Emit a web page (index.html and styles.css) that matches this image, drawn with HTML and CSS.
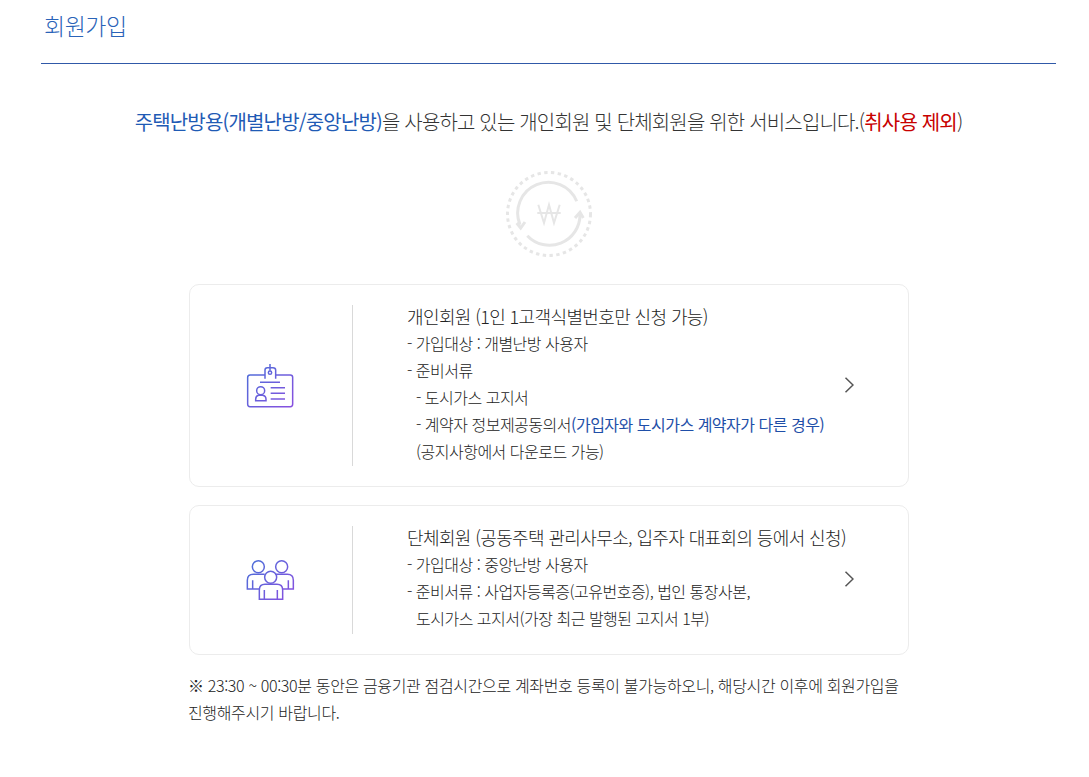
FILE: index.html
```html
<!DOCTYPE html>
<html lang="ko">
<head>
<meta charset="utf-8">
<title>회원가입</title>
<link rel="stylesheet" href="styles.css">
</head>
<body>
<main class="page">
  <h1 class="title">회원가입</h1>
  <p class="intro"><span class="blue">주택난방용(개별난방/중앙난방)</span>을 사용하고 있는 개인회원 및 단체회원을 위한 서비스입니다.(<span class="red">취사용 제외</span>)</p>
  <div class="hero">
    <svg width="88" height="88" viewBox="0 0 88 88" fill="none" stroke="#e6e6e6">
      <circle cx="44" cy="44" r="41.500" stroke-width="3" stroke-dasharray="3.400 3.400"/>
      <path d="M71.700 31.300A30.500 30.500 0 0 0 15 54.700" stroke-width="3"/>
      <path d="M11.700 53l4 5 4.300-6" stroke-width="3"/>
      <path d="M22.300 65.700A30.500 30.500 0 0 0 75 44.700" stroke-width="3"/>
      <path d="M70 48l5-5.700 3.300 5.700" stroke-width="3"/>
      <path d="M33.300 34.700L39 53l5-18.300L49 53l5.700-18.300M32.300 43h23.400" stroke-width="2"/>
    </svg>
  </div>
  <a class="card card-one">
    <div class="card-icon">
      <svg width="80" height="70" viewBox="0 3 240 210" fill="none" stroke="url(#g1)" stroke-width="4.500">
        <defs><linearGradient id="g1" gradientUnits="userSpaceOnUse" x1="55" y1="40" x2="190" y2="175"><stop offset="0" stop-color="#4a70d8"/><stop offset="1" stop-color="#8a4fe0"/></linearGradient></defs>
        <path d="M105 75H60q-7 0-7 7v81q0 7 7 7h121q7 0 7-7V82q0-7-7-7h-44"/>
        <path d="M105 86V60q0-7 7-7h17q8 0 8 7v26M120 42v20M90 97h60M122 113h43M122 130h43M122 147h43"/>
        <circle cx="120" cy="68" r="5"/>
        <circle cx="92" cy="122" r="12"/>
        <path d="M77 152v-4q0-10 9-12h12q10 2 10 12v4z"/>
      </svg>
    </div>
    <div class="card-body">
      <p class="card-title">개인회원 (1인 1고객식별번호만 신청 가능)</p>
      <p>- 가입대상 : 개별난방 사용자</p>
      <p>- 준비서류</p>
      <p class="indent">- 도시가스 고지서</p>
      <p class="indent">- 계약자 정보제공동의서<span class="blue-dark">(가입자와 도시가스 계약자가 다른 경우)</span></p>
      <p class="indent">(공지사항에서 다운로드 가능)</p>
    </div>
    <svg class="chev" width="10" height="16" viewBox="0 0 10 16" fill="none" stroke="#555" stroke-width="1.500"><path d="M1.500 .8L9 8l-7.500 7.200"/></svg>
  </a>
  <a class="card card-two">
    <div class="card-icon">
      <svg width="80" height="70" viewBox="0 0 240 210" fill="none" stroke="url(#g2)" stroke-width="4.500">
        <defs><linearGradient id="g2" gradientUnits="userSpaceOnUse" x1="55" y1="45" x2="190" y2="165"><stop offset="0" stop-color="#4a70d8"/><stop offset="1" stop-color="#8a4fe0"/></linearGradient></defs>
        <circle cx="85" cy="65" r="18"/>
        <circle cx="155" cy="65" r="18"/>
        <circle cx="122" cy="97" r="18"/>
        <path d="M104 88H70q-18 0-18 18v26h36M68 106v26M136 88h36q18 0 18 18v26h-32M175 106v26"/>
        <path d="M88 163v-28q0-17 17-17h36q17 0 17 17v28zM103 135v28M142 135v28"/>
      </svg>
    </div>
    <div class="card-body">
      <p class="card-title">단체회원 (공동주택 관리사무소, 입주자 대표회의 등에서 신청)</p>
      <p>- 가입대상 : 중앙난방 사용자</p>
      <p>- 준비서류 : 사업자등록증(고유번호증), 법인 통장사본,</p>
      <p class="indent">도시가스 고지서(가장 최근 발행된 고지서 1부)</p>
    </div>
    <svg class="chev" width="10" height="16" viewBox="0 0 10 16" fill="none" stroke="#555" stroke-width="1.500"><path d="M1.500 .8L9 8l-7.500 7.200"/></svg>
  </a>
  <p class="note">※ 23:30 ~ 00:30분 동안은 금융기관 점검시간으로 계좌번호 등록이 불가능하오니, 해당시간 이후에 회원가입을<br>진행해주시기 바랍니다.</p>
</main>
</body>
</html>
```
FILE: styles.css
```css
* { box-sizing: border-box; }
html, body { margin: 0; background: #fff; }
body {
  font-family: "Noto Sans CJK KR", "Noto Sans", sans-serif;
  font-weight: 400;
  color: #333;
  letter-spacing: -0.5px;
}
p { margin: 0; }
.page { width: 1015px; margin-left: 41px; padding-bottom: 40px; }
.title {
  margin: 0;
  height: 64px;
  padding: 8px 0 0 3px;
  font-size: 23px;
  line-height: 34px;
  font-weight: 300;
  color: #2a63b8;
  border-bottom: 1px solid #3059a8;
}
.intro {
  margin-top: 42px;
  text-align: center;
  font-size: 20px;
  line-height: 32px;
  letter-spacing: -0.83px;
  font-weight: 300;
  color: #333;
}
.blue { color: #1f5bb5; font-weight: 400; }
.red { color: #c80000; font-weight: 400; }
.blue-dark { color: #1f4fa8; font-weight: 400; }
.hero { display: flex; justify-content: center; margin-top: 32px; height: 88px; }
.card {
  display: flex;
  align-items: center;
  width: 720px;
  margin-left: 148px;
  border: 1px solid #ececec;
  border-radius: 10px;
}
.card-one { margin-top: 26px; height: 203px; }
.card-two { margin-top: 18px; height: 150px; }
.card-icon {
  flex: none;
  width: 163px;
  height: calc(100% - 40px);
  padding-right: 2px;
  border-right: 1px solid #d9d9d9;
  display: flex;
  align-items: center;
  justify-content: center;
}
.card-body {
  flex: 1;
  min-width: 0;
  padding: 0 0 4px 54px;
  font-size: 16px;
  font-weight: 300;
  line-height: 27px;
  color: #222;
  white-space: nowrap;
}
.card-title { font-size: 18px; letter-spacing: -0.62px; }
.indent { padding-left: 9px; }
.chev { flex: none; margin: 0 54px 2px 0; }
.note {
  margin: 17px 0 0 147px;
  width: 740px;
  font-size: 16px;
  font-weight: 300;
  line-height: 27px;
  letter-spacing: -0.35px;
  color: #222;
}
```
